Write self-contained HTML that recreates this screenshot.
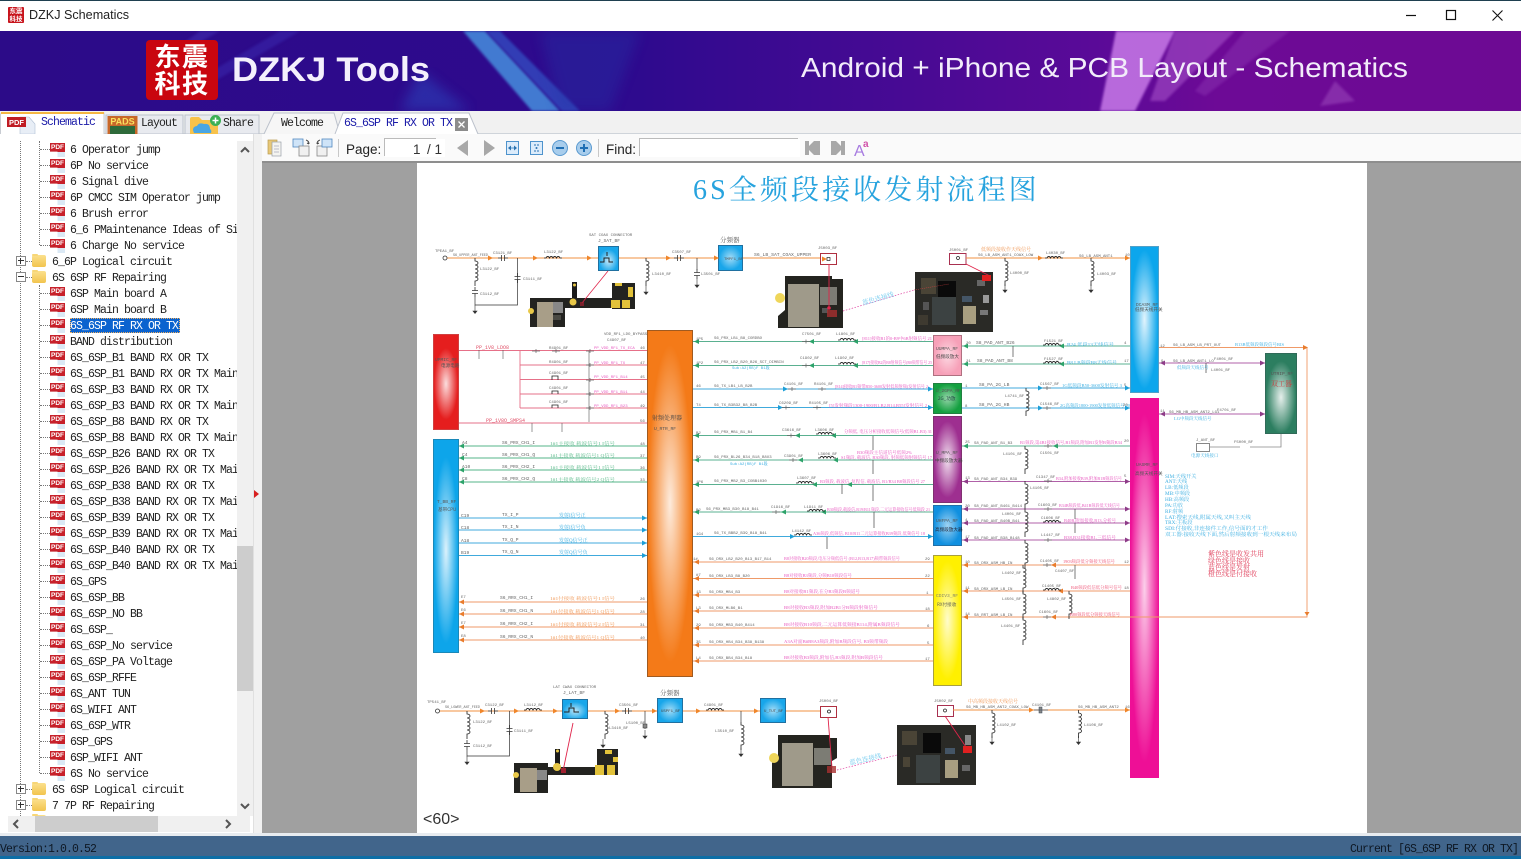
<!DOCTYPE html>
<html><head><meta charset="utf-8"><title>DZKJ Schematics</title>
<style>
html,body{margin:0;padding:0;background:#f0f0f0}
body{position:relative;width:1521px;height:859px;overflow:hidden;font-family:"Liberation Sans","Noto Sans CJK SC",sans-serif}
.abs,.b{position:absolute}
.m{font-family:"Liberation Mono","Noto Sans CJK SC",monospace;font-size:11.5px;letter-spacing:-.9px;color:#222;white-space:pre}
#tree{position:absolute;left:0;top:141px;width:237px;height:675px;overflow:hidden;background:#fff}
.r{position:relative;height:16px;line-height:20px;padding-left:70px;white-space:pre;font-family:"Liberation Mono",monospace;font-size:11.5px;letter-spacing:-.9px;color:#222}
.r:before{content:"";position:absolute;left:40px;top:8px;width:10px;border-top:1px dotted #777}
.r i{position:absolute;left:50px;top:2px;width:15px;height:14px;background:#dbe9f5;clip-path:polygon(0 0,100% 0,100% 100%,50% 100%,50% 62%,0 62%)}
.r i:after{content:"PDF";position:absolute;left:0;top:0;width:15px;height:9px;background:#c7202a;color:#fff;font:bold 6.5px/9px "Liberation Sans",sans-serif;letter-spacing:0;text-align:center}
.f{padding-left:52px}
.f:before{left:26px;width:6px}
.f i{left:32px;top:2px;width:14px;height:12px;clip-path:none;background:linear-gradient(#fbe08d,#f2c44e);border-radius:2px}
.f i:after{content:"";background:#f7d677;width:6px;height:2px;top:-1px;border-radius:1px}
.f b{position:absolute;left:16px;top:3px;width:8px;height:8px;border:1px solid #888;background:#fff;z-index:2}
.f b:before{content:"";position:absolute;left:1px;top:3px;width:6px;height:1px;background:#333}
.f b.p:after{content:"";position:absolute;left:3px;top:1px;width:1px;height:6px;background:#333}
.sel{color:#fff;position:relative}
.sel span{position:absolute;left:70px;top:1px;width:110px;height:15px;background:#0b63cf;outline:1px dotted #f0b060;outline-offset:-1px;line-height:18px}
.b{box-sizing:border-box}
svg text{white-space:pre}
.a{font:4px "Liberation Mono",monospace;fill:#666}
.p{font:4.6px "Liberation Mono",monospace;fill:#666}
.c{font:4.6px "Liberation Serif","Noto Serif CJK SC",serif}
.k{fill:#e85ac0}.g{fill:#5dbb8c}.u{fill:#3fb0e2}.o{fill:#f09a5a}
.w{fill:none;stroke:#333;stroke-width:.7}
.l{fill:none;stroke-width:.9}
</style></head><body>

<!-- title bar -->
<div class="abs" style="left:0;top:0;width:1521px;height:31px;background:#fff;border-top:1px solid #1f4050;box-sizing:border-box"></div>
<div class="abs" style="left:8px;top:7px;width:16px;height:16px;background:#c8141c;border-radius:1px;color:#fff;font:bold 6.5px/7.5px 'Noto Sans CJK SC',sans-serif;text-align:center;letter-spacing:0">东震<br>科技</div>
<div class="abs" style="left:29px;top:8px;font-size:12.6px;line-height:15px;color:#222">DZKJ Schematics</div>
<svg class="abs" style="left:1390px;top:0" width="131" height="31"><path d="M16 15.5h10" stroke="#111" stroke-width="1.2"/><rect x="56.5" y="10.5" width="9" height="9" fill="none" stroke="#111" stroke-width="1.2"/><path d="M102.5 10.5l10 10M112.5 10.5l-10 10" stroke="#111" stroke-width="1.1"/></svg>

<!-- banner -->
<svg class="abs" style="left:0;top:31px" width="1521" height="80" viewBox="0 0 1521 80">
<defs><linearGradient id="bg" x1="0" x2="1" y1="0" y2="0"><stop offset="0" stop-color="#2c0b88"/><stop offset=".42" stop-color="#2e0a8e"/><stop offset=".72" stop-color="#5a0a98"/><stop offset=".8" stop-color="#6d0a96"/><stop offset="1" stop-color="#6d0a93"/></linearGradient>
<filter id="bl"><feGaussianBlur stdDeviation="1.2"/></filter><filter id="bl2"><feGaussianBlur stdDeviation="6"/></filter></defs>
<rect width="1521" height="80" fill="url(#bg)"/>
<polygon points="280,0 300,0 215,50 195,50" fill="#3a2ab0" opacity=".5" filter="url(#bl)"/>
<polygon points="200,0 220,0 180,22 170,22" fill="#4a3ac0" opacity=".4" filter="url(#bl)"/>
<polygon points="463,0 485,0 560,80 532,80" fill="#4aa0e8" opacity=".75" filter="url(#bl)"/>
<polygon points="486,0 500,0 580,80 562,80" fill="#3460d0" opacity=".6" filter="url(#bl)"/>
<polygon points="420,40 470,80 400,80" fill="#2a4ac0" opacity=".5" filter="url(#bl2)"/>
<polygon points="540,0 640,0 610,80 560,80" fill="#2338a8" opacity=".35" filter="url(#bl2)"/>
<polygon points="1116,0 1175,0 1135,80 1100,80" fill="#c87ae8" opacity=".85" filter="url(#bl)"/>
<polygon points="1175,0 1235,0 1165,70 1150,70" fill="#a550c8" opacity=".6" filter="url(#bl)"/>
<polygon points="1245,0 1290,0 1205,65 1195,60" fill="#8a30b0" opacity=".5" filter="url(#bl)"/>
<polygon points="1335,50 1355,70 1320,75" fill="#a050c0" opacity=".5" filter="url(#bl)"/>
<rect x="146" y="9" width="72" height="60" rx="4" fill="#c9060f"/>
<text x="182" y="35" text-anchor="middle" style="font:bold 26px 'Noto Sans CJK SC',sans-serif;fill:#fff;letter-spacing:1.500px">东震</text>
<text x="182" y="62" text-anchor="middle" style="font:bold 26px 'Noto Sans CJK SC',sans-serif;fill:#fff;letter-spacing:1.500px">科技</text>
<text x="232" y="50" textLength="198" lengthAdjust="spacingAndGlyphs" style="font:bold 34px 'Liberation Sans',sans-serif;fill:#f4f0fc">DZKJ Tools</text>
<text x="801" y="46" textLength="607" lengthAdjust="spacingAndGlyphs" style="font:28px 'Liberation Sans',sans-serif;fill:#f2ecfa">Android + iPhone &amp; PCB Layout - Schematics</text>
</svg>

<!-- tab strip -->
<div class="abs" style="left:0;top:111px;width:1521px;height:23px;background:#f1f1f1"></div>
<div class="abs" style="left:0;top:133px;width:262px;height:1px;background:#cfd4da"></div>
<div class="abs" style="left:262px;top:133px;width:1259px;height:1px;background:#cfd4da"></div>
<svg class="abs" style="left:0;top:111px" width="480" height="24" viewBox="0 0 480 24">
<path d="M0.5 23V4q0-2 2-2H104v21" fill="#fff" stroke="#c8ccd2"/><rect x="1" y="1" width="103" height="2" fill="#f5b642"/>
<path d="M20 6h9l6 7v10H20z" fill="#e8eef6" stroke="#b0c0d4" stroke-width=".6"/>
<rect x="7" y="6" width="19" height="10" fill="#c01c24"/><text x="16.5" y="14" text-anchor="middle" style="font:bold 7.5px 'Liberation Sans',sans-serif;fill:#fff">PDF</text>
<rect x="106" y="4" width="77" height="19" fill="#e8eaef" stroke="#bcc2cc"/>
<rect x="107.5" y="5" width="30" height="18" fill="#c8682a"/><text x="122.5" y="13.5" text-anchor="middle" style="font:bold 9px 'Liberation Sans',sans-serif;fill:#f8e060">PADS</text><rect x="110" y="15" width="25" height="8" fill="#2e6a3a"/>
<rect x="185" y="4" width="74" height="19" fill="#e8eaef" stroke="#bcc2cc"/>
<path d="M190 8q0-2 2-2h7l3 3h16v14h-28z" fill="#f8c24a"/><path d="M194 22q-3-6 3-7q2-4 7-2q6-1 6 5q2 1 1 4z" fill="#4aa6e4"/><circle cx="215.500" cy="9.500" r="5.500" fill="#3cb054"/><path d="M212.500 9.500h6M215.500 6.500v6" stroke="#fff" stroke-width="1.500"/>
<path d="M264 23l10-21h60l6 21" fill="#f6f6f6" stroke="#bcc2cc"/>
<path d="M335 23l8-21h126l9 21" fill="#fff" stroke="#bcc2cc"/>
<rect x="455" y="7" width="13" height="13" fill="#8c8c8c"/><path d="M458.500 10.500l6 6M464.500 10.500l-6 6" stroke="#fff" stroke-width="1.300"/>
</svg>
<div class="abs m" style="left:41px;top:116px;color:#1a1aa8;line-height:14px">Schematic</div>
<div class="abs m" style="left:141px;top:117px;line-height:14px">Layout</div>
<div class="abs m" style="left:223px;top:117px;line-height:14px">Share</div>
<div class="abs m" style="left:281px;top:117px;line-height:14px">Welcome</div>
<div class="abs m" style="left:344px;top:117px;color:#1a1aa8;line-height:14px">6S_6SP RF RX OR TX</div>

<!-- left panel -->
<div class="abs" style="left:0;top:134px;width:253px;height:702px;background:#fff"></div>
<div id="tree">
<div class="r"><i></i>6 Operator jump</div>
<div class="r"><i></i>6P No service</div>
<div class="r"><i></i>6 Signal dive</div>
<div class="r"><i></i>6P CMCC SIM Operator jump</div>
<div class="r"><i></i>6 Brush error</div>
<div class="r"><i></i>6_6 PMaintenance Ideas of Si</div>
<div class="r"><i></i>6 Charge No service</div>
<div class="r f"><b class="p"></b><i></i>6_6P Logical circuit</div>
<div class="r f"><b></b><i></i>6S 6SP RF Repairing</div>
<div class="r"><i></i>6SP Main board A</div>
<div class="r"><i></i>6SP Main board B</div>
<div class="r sel"><i></i><span>6S_6SP RF RX OR TX</span></div>
<div class="r"><i></i>BAND distribution</div>
<div class="r"><i></i>6S_6SP_B1 BAND RX OR TX</div>
<div class="r"><i></i>6S_6SP_B1 BAND RX OR TX Main</div>
<div class="r"><i></i>6S_6SP_B3 BAND RX OR TX</div>
<div class="r"><i></i>6S_6SP_B3 BAND RX OR TX Main</div>
<div class="r"><i></i>6S_6SP_B8 BAND RX OR TX</div>
<div class="r"><i></i>6S_6SP_B8 BAND RX OR TX Main</div>
<div class="r"><i></i>6S_6SP_B26 BAND RX OR TX</div>
<div class="r"><i></i>6S_6SP_B26 BAND RX OR TX Mai</div>
<div class="r"><i></i>6S_6SP_B38 BAND RX OR TX</div>
<div class="r"><i></i>6S_6SP_B38 BAND RX OR TX Mai</div>
<div class="r"><i></i>6S_6SP_B39 BAND RX OR TX</div>
<div class="r"><i></i>6S_6SP_B39 BAND RX OR TX Mai</div>
<div class="r"><i></i>6S_6SP_B40 BAND RX OR TX</div>
<div class="r"><i></i>6S_6SP_B40 BAND RX OR TX Mai</div>
<div class="r"><i></i>6S_GPS</div>
<div class="r"><i></i>6S_6SP_BB</div>
<div class="r"><i></i>6S_6SP_NO BB</div>
<div class="r"><i></i>6S_6SP_</div>
<div class="r"><i></i>6S_6SP_No service</div>
<div class="r"><i></i>6S_6SP_PA Voltage</div>
<div class="r"><i></i>6S_6SP_RFFE</div>
<div class="r"><i></i>6S_ANT TUN</div>
<div class="r"><i></i>6S_WIFI ANT</div>
<div class="r"><i></i>6S_6SP_WTR</div>
<div class="r"><i></i>6SP_GPS</div>
<div class="r"><i></i>6SP_WIFI ANT</div>
<div class="r"><i></i>6S No service</div>
<div class="r f"><b class="p"></b><i></i>6S 6SP Logical circuit</div>
<div class="r f"><b class="p"></b><i></i>7 7P RF Repairing</div>
<div class="r f" style="height:3px"><i></i></div>
<div class="abs" style="left:20px;top:0;height:675px;border-left:1px dotted #777"></div>
<div class="abs" style="left:39px;top:0;height:104px;border-left:1px dotted #777"></div>
<div class="abs" style="left:39px;top:144px;height:488px;border-left:1px dotted #777"></div>
</div>
<!-- scrollbars -->
<div class="abs" style="left:237px;top:141px;width:16px;height:675px;background:#f0f0f0"></div>
<div class="abs" style="left:237px;top:546px;width:16px;height:145px;background:#cdcdcd"></div>
<div class="abs" style="left:8px;top:816px;width:242px;height:16px;background:#f0f0f0"></div>
<div class="abs" style="left:35px;top:816px;width:123px;height:16px;background:#cdcdcd"></div>
<svg class="abs" style="left:0;top:140px" width="262" height="696" viewBox="0 0 262 696">
<path d="M241 12l4-4 4 4M241 664l4 4 4-4M18 680l-4 4 4 4M226 680l4 4-4 4" fill="none" stroke="#555" stroke-width="2"/>
</svg>
<div class="abs" style="left:253px;top:134px;width:9px;height:702px;background:#f1f1f1;border-left:1px solid #e0e0e0;box-sizing:border-box"></div>
<svg class="abs" style="left:253px;top:488px" width="9" height="14"><polygon points="1,2 6,6 1,10" fill="#d82020"/></svg>

<!-- toolbar -->
<div class="abs" style="left:262px;top:134px;width:1259px;height:27px;background:#fafafa"></div>
<svg class="abs" style="left:262px;top:134px" width="620" height="27" viewBox="0 0 620 27">
<g>
<rect x="6" y="6" width="9" height="14" fill="#e8c878" stroke="#b89a50" stroke-width=".7"/><rect x="10" y="8" width="9" height="14" fill="#f4f4f0" stroke="#98a0a8" stroke-width=".7"/><path d="M12 12h5M12 15h5M12 18h5" stroke="#aab" stroke-width=".7"/>
<rect x="31" y="5" width="10" height="8" fill="#cfe4f8" stroke="#5088c0" stroke-width=".8"/><rect x="37" y="12" width="10" height="10" fill="#f0f0f0" stroke="#888" stroke-width=".8"/><path d="M44 6q3 1 3 4M47 10l-2-1" fill="none" stroke="#444"/>
<rect x="55" y="12" width="10" height="10" fill="#f0f0f0" stroke="#888" stroke-width=".8"/><rect x="60" y="5" width="10" height="8" fill="#cfe4f8" stroke="#5088c0" stroke-width=".8"/><path d="M58 6q-3 1-3 4M55 10l2-1" fill="none" stroke="#444"/>
<path d="M76.500 5v18" stroke="#c8c8c8"/>
<polygon points="206,6 206,22 195,14" fill="#a8a8a8"/><polygon points="222,6 222,22 233,14" fill="#a8a8a8"/>
<rect x="244.500" y="7.500" width="12" height="13" fill="#dcecfb" stroke="#4e93cc"/><path d="M247 14h7" stroke="#4e93cc"/><polygon points="246,14 249,11.500 249,16.500" fill="#2a72b0"/><polygon points="255,14 252,11.500 252,16.500" fill="#2a72b0"/>
<rect x="268.500" y="7.500" width="12" height="13" fill="#dcecfb" stroke="#4e93cc"/><path d="M272 11h5M272 17h5" stroke="#2a72b0" stroke-dasharray="2 1"/><circle cx="274.500" cy="14" r="1" fill="#2a72b0"/>
<circle cx="298" cy="14" r="7.500" fill="#a8cdec" stroke="#5a9ad0"/><path d="M294 14h8" stroke="#1f6fb4" stroke-width="2"/>
<circle cx="322" cy="14" r="7.500" fill="#a8cdec" stroke="#5a9ad0"/><path d="M318 14h8M322 10v8" stroke="#1f6fb4" stroke-width="2"/>
<path d="M336.500 5v18" stroke="#c8c8c8"/>
<path d="M543 7h4v5l5-5h6v14h-6l-5-5v5h-4z" fill="#a8a8a8"/><path d="M583 7h-4v5l-5-5h-5v14h5l5-5v5h4z" fill="#a8a8a8"/>
<text x="592" y="22" style="font:16px 'Liberation Sans',sans-serif;fill:#a77be0">A</text><text x="601" y="13" style="font:bold 10px 'Liberation Sans',sans-serif;fill:#d050a8">a</text>
</g>
<rect x="123" y="5" width="60" height="18" fill="#fff"/><rect x="378" y="5" width="160" height="18" fill="#fff"/>
<path d="M122.500 22V4.500H174M377.500 22V4.500H536" fill="none" stroke="#bbb"/>
</svg>
<div class="abs" style="left:346px;top:141px;font-size:13.5px;line-height:17px;color:#222">Page:</div>
<div class="abs" style="left:413px;top:141px;font-size:13.5px;line-height:17px;color:#333">1</div>
<div class="abs" style="left:427px;top:141px;font-size:13.5px;line-height:17px;color:#333">/ 1</div>
<div class="abs" style="left:606px;top:141px;font-size:13.5px;line-height:17px;color:#222">Find:</div>

<!-- document -->
<div class="abs" style="left:262px;top:161px;width:1259px;height:2px;background:#8e8e8e"></div>
<div class="abs" style="left:262px;top:163px;width:1105px;height:670px;background:#a0a0a0"></div>
<div class="abs" style="left:1367px;top:163px;width:154px;height:670px;background:#a0a0a0"></div>
<div class="abs" style="left:417px;top:163px;width:950px;height:670px;background:#fff"></div>

<!-- blocks -->
<div class="b" style="left:433px;top:334px;width:26px;height:96px;background:radial-gradient(ellipse 50% 38% at 50% 52%,rgba(255,255,255,.85),rgba(255,255,255,0)),#e51e1e;border:1px solid #d04040"></div>
<div class="b" style="left:433px;top:439px;width:26px;height:214px;background:radial-gradient(ellipse 50% 44% at 50% 52%,rgba(255,255,255,.85),rgba(255,255,255,0)),#0da5ea;border:1px solid #1a88b8"></div>
<div class="b" style="left:647px;top:330px;width:46px;height:347px;background:radial-gradient(ellipse 50% 46% at 50% 50%,rgba(255,255,255,.85),rgba(255,255,255,0)),#f47a18;border:1px solid #a05a20"></div>
<div class="b" style="left:933px;top:335px;width:29px;height:41px;background:radial-gradient(ellipse 50% 50% at 50% 50%,rgba(255,255,255,.6),rgba(255,255,255,0)),#f7a0b8;border:1px solid #b07080"></div>
<div class="b" style="left:933px;top:383px;width:29px;height:31px;background:radial-gradient(ellipse 50% 50% at 50% 50%,rgba(255,255,255,.55),rgba(255,255,255,0)),#14a040;border:1px solid #208040"></div>
<div class="b" style="left:933px;top:416px;width:29px;height:87px;background:radial-gradient(ellipse 50% 45% at 50% 50%,rgba(255,255,255,.85),rgba(255,255,255,0)),#9e2f90;border:1px solid #803070"></div>
<div class="b" style="left:933px;top:505px;width:29px;height:41px;background:radial-gradient(ellipse 50% 50% at 50% 50%,rgba(255,255,255,.6),rgba(255,255,255,0)),#1090e0;border:1px solid #2070a8"></div>
<div class="b" style="left:933px;top:555px;width:29px;height:131px;background:radial-gradient(ellipse 50% 46% at 50% 50%,rgba(255,255,255,.8),rgba(255,255,255,0)),#fff000;border:1px solid #a8a040"></div>
<div class="b" style="left:1130px;top:246px;width:29px;height:147px;background:radial-gradient(ellipse 50% 48% at 50% 50%,rgba(255,255,255,.88),rgba(255,255,255,0)),#0ca6ec;border:1px solid #50a0c8"></div>
<div class="b" style="left:1130px;top:398px;width:29px;height:380px;background:radial-gradient(ellipse 50% 46% at 50% 50%,rgba(255,255,255,.8),rgba(255,255,255,0)),#ee0f96"></div>
<div class="b" style="left:1265px;top:353px;width:32px;height:81px;background:radial-gradient(ellipse 50% 46% at 50% 55%,rgba(255,255,255,.88),rgba(255,255,255,0)),#2c7e60;border:1px solid #306a58"></div>
<div class="b" style="left:598px;top:246px;width:21px;height:25px;background:radial-gradient(ellipse 50% 50% at 50% 60%,rgba(255,255,255,.75),rgba(255,255,255,0)),#18a6ea;border:1px solid #2070a0"></div>
<div class="b" style="left:718px;top:245px;width:25px;height:26px;background:radial-gradient(ellipse 50% 50% at 50% 50%,rgba(255,255,255,.6),rgba(255,255,255,0)),#18a6ea;border:1px solid #2070a0"></div>
<div class="b" style="left:562px;top:699px;width:26px;height:20px;background:radial-gradient(ellipse 50% 50% at 50% 60%,rgba(255,255,255,.7),rgba(255,255,255,0)),#18a6ea;border:1px solid #2070a0"></div>
<div class="b" style="left:657px;top:698px;width:26px;height:25px;background:radial-gradient(ellipse 50% 50% at 50% 50%,rgba(255,255,255,.6),rgba(255,255,255,0)),#18a6ea;border:1px solid #2070a0"></div>
<div class="b" style="left:760px;top:698px;width:26px;height:25px;background:radial-gradient(ellipse 50% 50% at 50% 50%,rgba(255,255,255,.6),rgba(255,255,255,0)),#18a6ea;border:1px solid #2070a0"></div>

<!-- schematic -->
<svg class="abs" style="left:0;top:0;filter:blur(.35px)" width="1521" height="859" viewBox="0 0 1521 859">
<defs>
<path id="ch" d="M0 0h2a2 3 0 0 1 3.500 0a2 3 0 0 1 3.500 0a2 3 0 0 1 3.500 0a2 3 0 0 1 3.500 0h2" fill="none" stroke="#222" stroke-width=".8"/>
<path id="cv" d="M0 0v3a3 2 0 0 1 0 4a3 2 0 0 1 0 4a3 2 0 0 1 0 4a3 2 0 0 1 0 4a3 2 0 0 1 0 4v5" fill="none" stroke="#222" stroke-width=".8"/>
<path id="gn" d="M0 0v6M-2 6h4l-2 2.500z" fill="#333" stroke="#333" stroke-width=".6"/>
<path id="cp" d="M-5 0h3.500M-1.500-3v6M1.500-3v6M1.500 0H5" fill="none" stroke="#333" stroke-width=".8"/>
<path id="cq" d="M0-5v3.500M-3-1.500h6M-3 1.500h6M0 1.500V5" fill="none" stroke="#333" stroke-width=".8"/>
<path id="sm" d="M-4 0h8M0-2v4" stroke="#666" stroke-width=".7"/>
<polygon id="ar" points="0,-2.500 5,0 0,2.500"/>
<polygon id="al" points="5,-2.500 0,0 5,2.500"/>
<polygon id="ad" points="-2.500,0 2.500,0 0,4"/>
</defs>

<text x="693" y="199" style="font:28px 'Liberation Serif','Noto Serif CJK SC',serif;fill:#27a3de;letter-spacing:3.100px">6S全频段接收发射流程图</text>

<!-- top row -->
<g stroke="#f09040" class="l" fill="none"><path d="M447 258H598M619 258H718M743 258H820"/></g>
<circle cx="445" cy="258" r="2" fill="#fff" stroke="#333" stroke-width=".8"/>
<g fill="#f0862a"><use href="#ar" x="488" y="258"/><use href="#ar" x="533" y="258"/><use href="#ar" x="587" y="258"/><use href="#ar" x="666" y="258"/><use href="#ar" x="714" y="258"/></g>
<use href="#cp" x="503" y="258"/><use href="#cp" x="679" y="258"/><use href="#ch" x="544" y="258"/>
<use href="#cv" x="475" y="258"/><use href="#cq" x="475" y="292"/><use href="#gn" x="475" y="305"/>
<path class="w" d="M475 297v8H517.500V268M517.500 258v10"/><use href="#cq" x="517.500" y="278"/>
<use href="#cv" x="646" y="258"/><use href="#gn" x="646" y="286"/>
<use href="#cq" x="697" y="274"/><path class="w" d="M697 258v12"/><use href="#gn" x="697" y="279"/>
<path d="M600 262h4v-4h5v4h4" fill="none" stroke="#222" stroke-width="1"/><path d="M607 252v4" stroke="#222"/>
<rect x="820.500" y="253.500" width="16" height="11" fill="#fff" stroke="#b03040"/><use href="#ar" x="822" y="259" fill="#f0862a"/><rect x="827" y="257.500" width="3" height="3" fill="#fff" stroke="#222" stroke-width=".7"/>
<rect x="949.500" y="253.500" width="16.500" height="11" fill="#fff" stroke="#a83050"/><circle cx="958" cy="258" r="1.500" fill="#fff" stroke="#222" stroke-width=".7"/>
<path d="M966 258H1130" stroke="#f09040" class="l"/>
<g fill="#f0862a"><use href="#ar" x="1038" y="258"/><use href="#ar" x="1125" y="258"/></g>
<use href="#ch" x="1045" y="258"/><use href="#cv" x="1005" y="258"/><use href="#gn" x="1005" y="284"/><use href="#cv" x="1091" y="258"/><use href="#gn" x="1091" y="284"/>
<text class="a" x="435" y="252">TPEA1_BF</text><text class="a" x="453" y="256" textLength="35" lengthAdjust="spacingAndGlyphs">S6_UPPER_ANT_FEED</text><text class="a" x="493" y="254">C3121_BF</text><text class="a" x="544" y="253">L3122_BF</text>
<text class="a" x="589" y="236">SAT COAX CONNECTOR</text><text class="p" x="598" y="242">J_SAT_BF</text><text class="a" x="480" y="270">L3122_BF</text><text class="a" x="480" y="295">C3112_BF</text><text class="a" x="523" y="280">C3111_BF</text><text class="a" x="652" y="275">L3410_BF</text><text class="a" x="672" y="253">C3507_BF</text><text class="a" x="701" y="275">L3501_BF</text>
<text class="c" x="720" y="242" style="font-size:6.500px;fill:#555">分频器</text>
<text class="p" x="754" y="256" textLength="57" lengthAdjust="spacingAndGlyphs">S6_LB_SAT_COAX_UPPER</text><text class="a" x="818" y="249">J5003_BF</text><text class="a" x="949" y="251">J5001_BF</text>
<text class="c o" x="981" y="251" style="font-size:5px">低频段接收作天线信号</text><text class="a" x="978" y="256">S6_LB_ASM_ANT1_COAX_LOW</text><text class="a" x="1046" y="254">L4030_BF</text><text class="a" x="1079" y="257">S6_LB_ASM_ANT1</text><text class="a" x="1010" y="274">L4000_BF</text><text class="a" x="1097" y="275">L4003_BF</text><text class="a" x="1125" y="256">10</text>
<text class="a" x="724" y="260" style="fill:#555">TMPF1_BF</text>

<!-- red block rows -->
<g stroke="#e67088" class="l"><path d="M459 350.500H647M520 350.500V408M520 365H647M520 379.500H647M520 394H647M520 408H647M459 423H647"/></g>
<text class="c" x="476" y="349" style="fill:#e05068;font:5px 'Liberation Mono',monospace">PP_1V8_LDO8</text><text class="c" x="486" y="422" style="fill:#e05068;font:5px 'Liberation Mono',monospace">PP_1V8O_SMPS4</text>
<text class="a k" x="594" y="349">PP_VDD_RF1_TX_ECA</text><text class="a k" x="594" y="364">PP_VDD_RF1_TX</text><text class="a k" x="594" y="378">PP_VDD_RF1_B14</text><text class="a k" x="594" y="393">PP_VDD_RF1_B11</text><text class="a k" x="594" y="407">PP_VDD_RF1_B23</text>
<text class="a" x="604" y="335">VDD_RF1_LDO_BYPASS</text><text class="a" x="607" y="341">C4907_BF</text>
<g><use href="#sm" x="536" y="351"/><use href="#sm" x="556" y="351"/><use href="#sm" x="590" y="351"/><use href="#sm" x="590" y="365"/><use href="#sm" x="590" y="380"/><use href="#sm" x="590" y="394"/><use href="#sm" x="590" y="408"/>
<path d="M589 351v15M589 365v14M589 380v14M589 394v14M589 408v14M479 350v9M503 350v9M532 423v9M562 423v9" stroke="#555" stroke-width=".6"/></g>
<path d="M552 380v-4h6v4M552 394v-3h6v3M552 408v-3h6v3" fill="none" stroke="#222" stroke-width=".8"/>
<text class="a" x="549" y="349">R4901_BF</text><text class="a" x="549" y="363">R4901_BF</text><text class="a" x="549" y="374">C4901_BF</text><text class="a" x="549" y="389">C4901_BF</text><text class="a" x="549" y="403">C4901_BF</text>
<text class="a" x="640" y="349">46</text><text class="a" x="640" y="364">47</text><text class="a" x="640" y="378">45</text><text class="a" x="640" y="393">44</text><text class="a" x="640" y="407">49</text><text class="a" x="640" y="422">56</text>

<!-- left blue rows -->
<g stroke="#55b48a" class="l"><path d="M459 446H647M459 458H647M459 470H647M459 482H647"/></g>
<g fill="#2da36a"><use href="#al" x="459" y="446"/><use href="#al" x="459" y="458"/><use href="#al" x="459" y="470"/><use href="#al" x="459" y="482"/></g>
<text class="p" x="462" y="444">A4</text><text class="p" x="462" y="456">C4</text><text class="p" x="462" y="468">A10</text><text class="p" x="462" y="480">C8</text>
<text class="p" x="502" y="444">S6_PRX_CH1_I</text><text class="p" x="502" y="456">S6_PRX_CH1_Q</text><text class="p" x="502" y="468">S6_PRX_CH2_I</text><text class="p" x="502" y="480">S6_PRX_CH2_Q</text>
<text class="c g" x="550" y="445" textLength="65" lengthAdjust="spacingAndGlyphs">1#1主接收 载波信号1 I信号</text><text class="c g" x="550" y="457" textLength="65" lengthAdjust="spacingAndGlyphs">1#1主接收 载波信号1 Q信号</text><text class="c g" x="550" y="469" textLength="65" lengthAdjust="spacingAndGlyphs">1#1主接收 载波信号1 I信号</text><text class="c g" x="550" y="481" textLength="65" lengthAdjust="spacingAndGlyphs">1#1主接收 载波信号2 Q信号</text>
<text class="a" x="640" y="445">48</text><text class="a" x="640" y="457">37</text><text class="a" x="640" y="469">36</text><text class="a" x="640" y="481">33</text>
<g stroke="#40aadc" class="l"><path d="M459 518H647M459 530H647M459 543H647M459 555.500H647"/></g>
<g fill="#1d9fd8"><use href="#ar" x="642" y="518"/><use href="#ar" x="642" y="530"/><use href="#ar" x="642" y="543"/><use href="#ar" x="642" y="555.500"/></g>
<text class="p" x="461" y="517">C19</text><text class="p" x="461" y="529">C18</text><text class="p" x="461" y="542">A18</text><text class="p" x="461" y="554">B19</text>
<text class="p" x="502" y="516">TX_I_P</text><text class="p" x="502" y="528">TX_I_N</text><text class="p" x="502" y="541">TX_Q_P</text><text class="p" x="502" y="553">TX_Q_N</text>
<text class="c u" x="559" y="517" style="font-size:5px">发射I信号正</text><text class="c u" x="559" y="529" style="font-size:5px">发射I信号负</text><text class="c u" x="559" y="542" style="font-size:5px">发射Q信号正</text><text class="c u" x="559" y="554" style="font-size:5px">发射Q信号负</text>
<g stroke="#ef9a68" class="l"><path d="M459 602H647M459 614H647M459 627H647M459 640H647"/></g>
<g fill="#e97c2c"><use href="#al" x="459" y="602"/><use href="#al" x="459" y="614"/><use href="#al" x="459" y="627"/><use href="#al" x="459" y="640"/></g>
<text class="a" x="461" y="598">E7</text><text class="a" x="461" y="611">E6</text><text class="a" x="461" y="624">E7</text><text class="a" x="461" y="637">E8</text>
<text class="p" x="500" y="599">S6_RRX_CH1_I</text><text class="p" x="500" y="612">S6_RRX_CH1_N</text><text class="p" x="500" y="625">S6_RRX_CH2_I</text><text class="p" x="500" y="638">S6_RRX_CH2_N</text>
<text class="c o" x="550" y="600" textLength="65" lengthAdjust="spacingAndGlyphs">1#1付接收 载波信号1 I信号</text><text class="c o" x="550" y="613" textLength="65" lengthAdjust="spacingAndGlyphs">1#1付接收 载波信号1 Q信号</text><text class="c o" x="550" y="626" textLength="65" lengthAdjust="spacingAndGlyphs">1#1付接收 载波信号2 I信号</text><text class="c o" x="550" y="639" textLength="65" lengthAdjust="spacingAndGlyphs">1#1付接收 载波信号1 Q信号</text>
<text class="a" x="640" y="600">26</text><text class="a" x="640" y="613">28</text><text class="a" x="640" y="626">31</text><text class="a" x="640" y="639">40</text>

<!-- center rows -->
<g stroke="#5ab090" class="l"><path d="M693 341.500H933M693 365.500H933M693 435.500H933M693 460H933M693 484.500H933M693 512H933"/></g>
<g stroke="#40aadc" class="l"><path d="M693 389H933M693 407.500H933M693 536.500H933"/></g>
<g stroke="#ef9a68" class="l"><path d="M693 562H933M693 578.500H933M693 595H933M693 611H933M693 628H933M693 645H933M693 661H933"/></g>
<g fill="#2da36a"><use href="#al" x="694" y="341.500"/><use href="#al" x="809" y="341.500"/><use href="#al" x="853" y="341.500"/><use href="#al" x="694" y="365.500"/><use href="#al" x="809" y="365.500"/><use href="#al" x="853" y="365.500"/><use href="#al" x="694" y="435.500"/><use href="#al" x="795" y="435.500"/><use href="#al" x="831" y="435.500"/><use href="#al" x="694" y="460"/><use href="#al" x="798" y="460"/><use href="#al" x="833" y="460"/><use href="#al" x="694" y="484.500"/><use href="#al" x="812" y="484.500"/><use href="#al" x="847" y="484.500"/><use href="#al" x="694" y="512"/><use href="#al" x="781" y="512"/><use href="#al" x="821" y="512"/></g>
<g fill="#1d9fd8"><use href="#ar" x="783" y="389"/><use href="#ar" x="928" y="389"/><use href="#ar" x="778" y="407.500"/><use href="#ar" x="928" y="407.500"/><use href="#ar" x="790" y="536.500"/><use href="#ar" x="928" y="536.500"/></g>
<g fill="#e97c2c"><use href="#al" x="694" y="562"/><use href="#al" x="694" y="578.500"/><use href="#al" x="694" y="595"/><use href="#al" x="694" y="611"/><use href="#al" x="694" y="628"/><use href="#al" x="694" y="645"/><use href="#al" x="694" y="661"/></g>
<use href="#ch" x="838" y="340"/><use href="#ch" x="838" y="364"/><use href="#ch" x="816" y="434"/><use href="#ch" x="818" y="458"/><use href="#ch" x="796" y="483"/><use href="#ch" x="807" y="511"/><use href="#ch" x="794" y="535"/>
<use href="#sm" x="806" y="341.500"/><use href="#sm" x="806" y="365.500"/><use href="#sm" x="791" y="435.500"/><use href="#sm" x="793" y="460"/><use href="#sm" x="776" y="512"/><use href="#sm" x="792" y="389"/><use href="#sm" x="786" y="407.500"/><use href="#sm" x="822" y="389"/><use href="#sm" x="817" y="407.500"/>
<path d="M873 436v14M873 460v14M873 485v16M874 512v16M827 537v12M842 484v10" stroke="#444" stroke-width=".7"/>
<text class="a" x="696" y="340">1P5</text><text class="a" x="696" y="364">1P2</text><text class="a" x="696" y="387">46</text><text class="a" x="696" y="406">T4</text><text class="a" x="696" y="434">B2</text><text class="a" x="696" y="458">B9</text><text class="a" x="696" y="483">1P6</text><text class="a" x="696" y="511">B2</text><text class="a" x="696" y="535">1G4</text>
<text class="a" x="714" y="339">S6_PRX_LB1_B8_CORDBO</text><text class="a" x="714" y="363">S6_PRX_LB2_B20_B26_SCT_DIMBIN</text><text class="a" x="714" y="387">S6_TX_LB1_LB_B2B</text><text class="a" x="714" y="406">S6_TX_B3B32_B8_B2B</text><text class="a" x="714" y="433">S6_PRX_MB1_B1_B4</text><text class="a" x="714" y="458">S6_PRX_BL26_B34_B18_B8U3</text><text class="a" x="714" y="482">S6_PRX_MB2_B3_COBB1030</text><text class="a" x="706" y="510">S6_PRX_MB3_B30_B18_B41</text><text class="a" x="714" y="534">S6_TX_BBB2_B39_B18_B41</text>
<text class="a" x="802" y="335">C7501_BF</text><text class="a" x="836" y="335">L1801_BF</text><text class="a" x="800" y="359">C1902_BF</text><text class="a" x="835" y="359">L1902_BF</text><text class="a" x="784" y="385">C4101_BF</text><text class="a" x="814" y="385">R4101_BF</text><text class="a" x="779" y="404">C6209_BF</text><text class="a" x="809" y="404">R4105_BF</text><text class="a" x="782" y="431">C3616_BF</text><text class="a" x="815" y="431">L3606_BF</text><text class="a" x="784" y="457">C3901_BF</text><text class="a" x="818" y="455">L3606_BF</text><text class="a" x="797" y="479">L3607_BF</text><text class="a" x="771" y="508">C1916_BF</text><text class="a" x="804" y="508">L1911_BF</text><text class="a" x="792" y="532">L4142_BF</text>
<g class="c k">
<text x="862" y="340" textLength="70" lengthAdjust="spacingAndGlyphs">[811]接收B1的0-B9中6B射频信号 21</text><text x="862" y="364" textLength="70" lengthAdjust="spacingAndGlyphs">[817]接收B2的B8射频信号(B0频带信号 25</text>
<text x="835" y="388" textLength="93" lengthAdjust="spacingAndGlyphs">[814]接收B1频带B50-3600发射低频射频(发射信号 2</text><text x="829" y="407" textLength="98" lengthAdjust="spacingAndGlyphs">[5]发射频段1300-1900/B1,B2,B14,B55]发射信号 2</text>
<text x="844" y="433" textLength="88" lengthAdjust="spacingAndGlyphs">分频低, 电压分析接收低频信号(低频B1.B3) 31</text><text x="857" y="454" textLength="55" lengthAdjust="spacingAndGlyphs">B30频段主信道信号低频2%</text><text x="841" y="459" textLength="91" lengthAdjust="spacingAndGlyphs">S1频段, 载波信, B30频段, 射频低频射频信号 17</text><text x="820" y="483" textLength="105" lengthAdjust="spacingAndGlyphs">B3频段, 载波信, 复程信, 载波信, B1/B34 B8频段信号 27</text><text x="827" y="511" textLength="103" lengthAdjust="spacingAndGlyphs">B30频段,载波信,B19/B11频段,二元运算接收信号低频段 21</text><text x="813" y="535" textLength="112" lengthAdjust="spacingAndGlyphs">A36频段,低频信, B10/B11二元运算接收B39频段,低频信号 18</text>
</g>
<text class="a u" x="732" y="369">Sub:A2(RB)F B1段</text><text class="a u" x="730" y="465">Sub:A2(RB)F B1段</text>
<text class="a" x="693" y="560">1#</text><text class="a" x="696" y="576">#7</text><text class="a" x="696" y="593">13</text><text class="a" x="696" y="609">L3</text><text class="a" x="696" y="626">29</text><text class="a" x="696" y="643">35</text><text class="a" x="696" y="659">L4</text>
<text class="a" x="709" y="560">S6_DRX_LB2_B20_B13_B17_B14</text><text class="a" x="709" y="577">S6_DRX_LB3_B8_B20</text><text class="a" x="709" y="593">S6_DRX_MB4_B3</text><text class="a" x="709" y="609">S6_DRX_MLB6_B1</text><text class="a" x="709" y="626">S6_DRX_MB3_B40_B414</text><text class="a" x="709" y="643">S6_DRX_HB4_B34_B38_B138</text><text class="a" x="709" y="659">S6_DRX_BB4_B34_B18</text>
<g class="c k"><text x="784" y="560" textLength="116" lengthAdjust="spacingAndGlyphs">B8对接收B20频段,电压分频低信号 (B12,B13,B17)频带频段信号</text><text x="784" y="577" textLength="68" lengthAdjust="spacingAndGlyphs">B8对接收B3频段,分频B10频段信号</text><text x="784" y="593" textLength="76" lengthAdjust="spacingAndGlyphs">B8对接收B1频段,在分B3频段B频道号</text><text x="784" y="609" textLength="94" lengthAdjust="spacingAndGlyphs">B8对接收B3频段,附加B2B1分B频段射频信号</text><text x="784" y="626" textLength="116" lengthAdjust="spacingAndGlyphs">B8对接收B10频段,二元运算低频接B114,附属B频段信号</text><text x="784" y="643" textLength="104" lengthAdjust="spacingAndGlyphs">A3A对面B#B8A3频段,附加B频段信号, B3频带频段</text><text x="784" y="659" textLength="99" lengthAdjust="spacingAndGlyphs">B8对接收B3频段,附加信,B3频段,附加B频段信号</text></g>
<text class="a" x="925" y="560">29</text><text class="a" x="925" y="577">22</text><text class="a" x="926" y="594">1</text><text class="a" x="925" y="610">18</text><text class="a" x="927" y="627">6</text><text class="a" x="927" y="644">5</text><text class="a" x="925" y="660">17</text>

<!-- between blocks -->
<g stroke="#5ab090" class="l"><path d="M962 346H1130M962 364H1130M962 446H1130"/></g>
<g stroke="#40aadc" class="l"><path d="M962 388H1130M962 408H1130"/></g>
<g stroke="#b060a8" class="l"><path d="M962 481.500H1130M962 509H1130M962 523H1130M962 540H1130M1159 363H1265M1159 414H1265"/></g>
<g stroke="#ef9a68" class="l"><path d="M962 565H1130M962 591H1130M962 617H1307V347.500H1159"/></g>
<g fill="#2da36a"><use href="#al" x="963" y="346"/><use href="#al" x="1059" y="346"/><use href="#al" x="963" y="364"/><use href="#al" x="1059" y="364"/><use href="#al" x="963" y="446"/><use href="#al" x="1053" y="446"/></g>
<g fill="#1d9fd8"><use href="#ar" x="1038" y="388"/><use href="#ar" x="1125" y="388"/><use href="#ar" x="1038" y="408"/><use href="#ar" x="1125" y="408"/></g>
<g fill="#8e3c88"><use href="#al" x="963" y="481.500"/><use href="#ar" x="1125" y="481.500"/><use href="#al" x="963" y="509"/><use href="#ar" x="1125" y="509"/><use href="#al" x="963" y="523"/><use href="#ar" x="1125" y="523"/><use href="#al" x="963" y="540"/><use href="#ar" x="1125" y="540"/><use href="#al" x="1160" y="363"/><use href="#ar" x="1260" y="363"/><use href="#al" x="1160" y="414"/><use href="#ar" x="1260" y="414"/></g>
<g fill="#e97c2c"><use href="#al" x="963" y="565"/><use href="#al" x="1051" y="565"/><use href="#al" x="963" y="591"/><use href="#al" x="1058" y="591"/><use href="#al" x="963" y="617"/><use href="#al" x="1051" y="617"/><use href="#ar" x="1303" y="347.500"/><use href="#ad" x="1307" y="612"/></g>
<use href="#ch" x="1043" y="345"/><use href="#ch" x="1043" y="363"/><use href="#ch" x="1043" y="522"/><use href="#ch" x="1043" y="590"/>
<use href="#sm" x="1047" y="388"/><use href="#sm" x="1047" y="408"/><use href="#sm" x="1048" y="446"/><use href="#sm" x="1048" y="481"/><use href="#sm" x="1048" y="509"/><use href="#sm" x="1048" y="540"/><use href="#sm" x="1047" y="565"/><use href="#sm" x="1047" y="617"/>
<path d="M1013 346v11" stroke="#444" stroke-width=".7"/><use href="#cv" x="1026" y="388"/><use href="#cv" x="1025" y="446"/><use href="#cv" x="1025" y="481"/><use href="#cv" x="1025" y="509"/><use href="#cv" x="1025" y="540"/><use href="#cv" x="1023" y="565"/><use href="#cv" x="1023" y="591"/><use href="#cv" x="1023" y="617"/><use href="#cv" x="1069" y="591"/>
<path d="M1075 565v14M1075 509v10M1075 523v10M1206 363v10" stroke="#444" stroke-width=".7"/>
<text class="p" x="976" y="344">S8_PAD_ANT_B26</text><text class="p" x="977" y="362">S8_PAD_ANT_B8</text><text class="p" x="979" y="386">S8_PA_2G_LB</text><text class="p" x="979" y="406">S8_PA_2G_HB</text><text class="a" x="974" y="444">S8_PAD_ANT_B1_B3</text><text class="a" x="974" y="480">S8_PAD_ANT_B34_B39</text><text class="a" x="974" y="507">S8_PAD_ANT_B461_B414</text><text class="a" x="974" y="522">S8_PAD_ANT_B40B_B41</text><text class="a" x="974" y="539">S8_PAD_ANT_B38_B148</text><text class="a" x="974" y="564">S8_DRX_ASM_HB_IN</text><text class="a" x="974" y="590">S8_DRX_ASM_LB_IN</text><text class="a" x="974" y="616">S8_RRT_ASM_LB_IN</text>
<text class="a" x="1044" y="342">F1521_BF</text><text class="a" x="1044" y="360">F1527_BF</text><text class="a" x="1040" y="385">C1567_BF</text><text class="a" x="1040" y="405">C1546_BF</text><text class="a" x="1040" y="454">C1501_BF</text><text class="a" x="1036" y="478">C1347_BF</text><text class="a" x="1038" y="506">C1603_BF</text><text class="a" x="1041" y="519">C1606_BF</text><text class="a" x="1041" y="536">L1447_BF</text><text class="a" x="1040" y="562">C1405_BF</text><text class="a" x="1042" y="587">C1405_BF</text><text class="a" x="1039" y="613">C1601_BF</text>
<text class="a" x="1005" y="397">L4741_BF</text><text class="a" x="1003" y="455">L4101_BF</text><text class="a" x="1030" y="489">L4105_BF</text><text class="a" x="1002" y="515">L4001_BF</text><text class="a" x="1002" y="574">L4402_BF</text><text class="a" x="1002" y="600">L4501_BF</text><text class="a" x="1001" y="627">L4401_BF</text><text class="a" x="1047" y="600">L4802_BF</text><text class="a" x="1055" y="572">C4407_BF</text>
<g class="c"><text class="u" x="1067" y="346" textLength="47" lengthAdjust="spacingAndGlyphs">B24 低段13天线信号</text><text class="u" x="1067" y="364" textLength="50" lengthAdjust="spacingAndGlyphs">B8 LB频段B8天线信号</text><text class="u" x="1062" y="387" textLength="60" lengthAdjust="spacingAndGlyphs">1G低频段B50-3600发射信号 3</text><text class="u" x="1060" y="407" textLength="70" lengthAdjust="spacingAndGlyphs">2G高频段1800-1900发射低频信号 20</text><text class="k" x="1020" y="444" textLength="102" lengthAdjust="spacingAndGlyphs">B1频段,第4B1接收信号,B1频段,附加B1发射B频段B34</text><text class="k" x="1056" y="480" textLength="66" lengthAdjust="spacingAndGlyphs">B34,附加接收B39,附加B1B频段信号</text><text class="k" x="1059" y="507" textLength="61" lengthAdjust="spacingAndGlyphs">B34B频段低,B41B频段低天线信号</text><text class="k" x="1064" y="522" textLength="52" lengthAdjust="spacingAndGlyphs">B40B,附加接收,B13,分析号</text><text class="k" x="1064" y="539" textLength="52" lengthAdjust="spacingAndGlyphs">B38,B31接收B1,三低信号</text><text class="k" x="1063" y="563" textLength="52" lengthAdjust="spacingAndGlyphs" style="fill:#e57">1903频段低分频接天线信号</text><text class="k" x="1071" y="589" textLength="51" lengthAdjust="spacingAndGlyphs" style="fill:#e57">B40频段低信低分频号信号</text><text class="k" x="1070" y="616" textLength="50" lengthAdjust="spacingAndGlyphs" style="fill:#e57">B80频段低分频接天线信号</text></g>
<text class="a" x="1124" y="344">4</text><text class="a" x="1124" y="362">17</text><text class="a" x="1124" y="386">5</text><text class="a" x="1123" y="406">20</text><text class="a" x="1124" y="442">20</text><text class="a" x="1124" y="477">5</text><text class="a" x="1124" y="563">12</text><text class="a" x="1124" y="589">18</text><text class="a" x="966" y="344">20</text><text class="a" x="966" y="362">21</text><text class="a" x="965" y="387">1</text><text class="a" x="965" y="407">8</text><text class="a" x="965" y="443">25</text><text class="a" x="965" y="479">13</text><text class="a" x="965" y="507">20</text><text class="a" x="965" y="521">4</text><text class="a" x="965" y="538">17</text><text class="a" x="965" y="563">10</text><text class="a" x="965" y="589">11</text><text class="a" x="965" y="615">14</text>
<text class="a" x="1160" y="347">12</text><text class="a" x="1173" y="346">S6_LB_ASM_LB_PRT_OUT</text><text class="c u" x="1235" y="346" style="font-size:4.500px">B13B低频段频段信号RIS</text>
<text class="a" x="1161" y="362">9</text><text class="a" x="1173" y="362">S6_LB_ASM_ANT1_LO</text><text class="a" x="1214" y="360">F4001_BF</text><text class="c u" x="1177" y="369" style="font-size:4.500px">低频段天线信号</text><text class="a" x="1211" y="371">L4001_BF</text><text class="a" x="1160" y="412">11</text><text class="a" x="1169" y="413">S6_MB_HB_ASM_ANT2_LG1</text><text class="a" x="1217" y="411">F4701_BF</text><text class="c u" x="1174" y="420" style="font-size:4.500px">LG中频段天线信号</text>
<rect x="1196.500" y="443.500" width="13" height="8" fill="#fff" stroke="#555" stroke-width=".7"/><path d="M1209 447H1240M1250 447H1281V434" fill="none" stroke="#888" stroke-width=".8"/><text class="a" x="1196" y="441">J_ANT_BF</text><text class="a" x="1234" y="443">F5000_BF</text><text class="c u" x="1191" y="457">电源天线接口</text>

<!-- legend -->
<g class="c u" style="font-size:5.200px"><text x="1165" y="478">SIM:天线开关</text><text x="1165" y="483">ANT:天线</text><text x="1165" y="489">LB:低频段</text><text x="1165" y="495">MB:中频段</text><text x="1165" y="501">HB:高频段</text><text x="1165" y="507">PA:功放</text><text x="1165" y="513">RF:射频</text><text x="1165" y="519" textLength="86" lengthAdjust="spacingAndGlyphs">LAT:搜索天线,附属天线,又叫主天线</text><text x="1165" y="524">TRX:主板段</text><text x="1165" y="530" textLength="103" lengthAdjust="spacingAndGlyphs">SDI:付接收,非连接件工作,信号面的才工作</text><text x="1165" y="536" textLength="132" lengthAdjust="spacingAndGlyphs">双工器:接收天线下面,然后射频接收到一根天线来布局</text></g>
<g class="c" style="font-size:7px;fill:#e0405c"><text x="1208" y="556">紫色线是收发共用</text><text x="1208" y="563">绿色线是接收</text><text x="1208" y="569.500">蓝色线是发射</text><text x="1208" y="576">橙色线是付接收</text></g>

<!-- block labels -->
<g class="p" style="fill:#555"><text x="435" y="361">UPMIC_RF</text><text x="441" y="367" style="font-family:'Noto Sans CJK SC',sans-serif">电源电路</text><text x="437" y="503">T_BB_RF</text><text x="438" y="511" style="font-family:'Noto Sans CJK SC',sans-serif">基带CPU</text><text class="c" x="652" y="420" style="font-size:6px;fill:#444">射频处理器</text><text x="654" y="430">U_RTR_RF</text><text x="936" y="350">UUMPA_RF</text><text x="936" y="358" style="font-family:'Noto Sans CJK SC',sans-serif;fill:#444">低频段放大</text><text x="936" y="392">U_2GPA_RF</text><text x="938" y="400" style="font-family:'Noto Sans CJK SC',sans-serif;fill:#244">2G_功放</text><text x="936" y="454">U_MPA_RF</text><text x="935" y="462" style="font-family:'Noto Sans CJK SC',sans-serif;fill:#444">中频段放大器</text><text x="936" y="522">UHFPA_RF</text><text x="935" y="531" style="font-family:'Noto Sans CJK SC',sans-serif;fill:#223">高频段放大器</text><text x="936" y="597" style="fill:#886">CDIV3_RF</text><text x="937" y="606" style="font-family:'Noto Sans CJK SC',sans-serif;fill:#665">RX付接收</text><text x="1136" y="306">DCASM_RF</text><text x="1135" y="311" style="font-family:'Noto Sans CJK SC',sans-serif">低频天线开关</text><text x="1136" y="466">UASMR_RF</text><text x="1135" y="475" style="font-family:'Noto Sans CJK SC',sans-serif">高频天线开关</text><text x="1271" y="375">UTRIP_RF</text></g>
<text class="c" x="1271" y="386" style="font-size:7px;fill:#c84040">双工器</text>
<text class="a" x="661" y="712" style="fill:#444">USPF1_BF</text><text class="a" x="764" y="712" style="fill:#444">U_TUT_BF</text>

<!-- pcb top flex -->
<g>
<rect x="572" y="282" width="5" height="17" fill="#1a1a1a"/><circle cx="574.500" cy="285" r="1.500" fill="#e8c848"/>
<rect x="530" y="298" width="35" height="29" fill="#232320"/><rect x="563" y="298" width="50" height="10" fill="#232320"/><rect x="612" y="283" width="23" height="26" fill="#232320"/>
<rect x="537" y="302" width="16" height="25" fill="#a89e88"/><rect x="553" y="302" width="10" height="11" fill="#888"/><rect x="553" y="315" width="8" height="5" fill="#4a4a44"/>
<circle cx="573" cy="302" r="3.500" fill="#e8c848"/><circle cx="531" cy="311" r="3" fill="#e8c848"/>
<rect x="611" y="300" width="9" height="8" fill="#e2c23a"/><rect x="622" y="300" width="8" height="8" fill="#e2c23a"/><rect x="628" y="287" width="5" height="10" fill="#e2c23a"/><rect x="615" y="283" width="7" height="3" fill="#e2c23a"/>
<path d="M608 271L582 303" stroke="#e0244a" stroke-width=".8"/><rect x="580" y="302" width="4" height="4" fill="#a02030" opacity=".7"/>
</g>
<!-- pcb top 2 -->
<path d="M785 276h47v3h11v49h-65v-12l7-6z" fill="#24241f"/><circle cx="780" cy="298" r="5" fill="#efd65a"/>
<rect x="788" y="284" width="31" height="43" fill="#9f9a8a"/><rect x="820" y="287" width="17" height="18" fill="#7c7c74"/><rect x="822" y="308" width="6" height="5" fill="#555"/>
<path d="M829 264V308" stroke="#e0244a" stroke-width=".9"/><circle cx="829" cy="308" r="1.800" fill="#e0244a"/><rect x="827" y="310" width="10" height="7" fill="#a83030" opacity=".8"/>
<path d="M843 311L914 290" stroke="#e040a0" stroke-width=".7" stroke-dasharray="1.500 1.500"/>
<text class="c u" x="863" y="305" transform="rotate(-16 863 305)" style="font-size:6.500px;fill:#6cc8ee">蓝色连接线</text>
<!-- pcb top 3 -->
<rect x="915" y="272" width="78" height="60" fill="#2a2a26"/><rect x="938" y="281" width="18" height="22" fill="#0a0a0a"/><rect x="932" y="297" width="24" height="28" fill="#3c4242"/><rect x="963" y="306" width="13" height="18" fill="#a89e80"/><rect x="921" y="278" width="15" height="16" fill="#4a4436"/><rect x="983" y="295" width="6" height="8" fill="#999"/><rect x="977" y="280" width="8" height="6" fill="#666"/><rect x="923" y="302" width="6" height="8" fill="#555"/><rect x="918" y="315" width="10" height="10" fill="#3e3a30"/><rect x="962" y="296" width="10" height="6" fill="#456"/><rect x="980" y="310" width="8" height="5" fill="#777"/>
<path d="M966 264L990 276" stroke="#e0244a" stroke-width=".9"/><rect x="982" y="275" width="9" height="6" fill="#e02020"/>
<path d="M914 290l35-6" stroke="#e04040" stroke-width=".5" stroke-dasharray="1 1"/>

<!-- bottom row -->
<g stroke="#f09040" class="l"><path d="M439 711H562M588 711H657M683 711H760M786 711H820"/></g>
<circle cx="437.500" cy="711" r="2" fill="#fff" stroke="#333" stroke-width=".8"/>
<g fill="#f0862a"><use href="#ar" x="480" y="711"/><use href="#ar" x="514" y="711"/><use href="#ar" x="553" y="711"/><use href="#ar" x="615" y="711"/><use href="#ar" x="652" y="711"/><use href="#ar" x="696" y="711"/><use href="#ar" x="754" y="711"/><use href="#ar" x="822" y="711"/></g>
<use href="#cp" x="493" y="711"/><use href="#ch" x="524" y="710"/><use href="#cp" x="627" y="711"/><use href="#ch" x="706" y="710"/>
<use href="#cv" x="467" y="711"/><use href="#cq" x="467" y="745"/><path class="w" d="M467 750v6H509.500V711"/><use href="#cq" x="509.500" y="730"/><use href="#gn" x="467" y="756"/>
<use href="#cv" x="605" y="711"/><use href="#gn" x="603" y="739"/>
<path class="w" d="M645 711v18"/><rect x="643" y="724" width="4" height="4" fill="#888" stroke="#333" stroke-width=".5"/><use href="#gn" x="645" y="730"/>
<use href="#cv" x="741" y="722"/><path class="w" d="M741 711v11"/><use href="#gn" x="741" y="748"/>
<path d="M564 712h5v-4h5v4h5" fill="none" stroke="#222" stroke-width="1"/><path d="M571 703v4" stroke="#222"/>
<rect x="820.500" y="706.500" width="16" height="11" fill="#fff" stroke="#b03040"/><circle cx="829" cy="711.500" r="1.500" fill="#fff" stroke="#222" stroke-width=".8"/>
<rect x="937.500" y="705.500" width="16" height="11" fill="#fff" stroke="#a83050"/><circle cx="945" cy="710.500" r="1.500" fill="#fff" stroke="#222" stroke-width=".7"/>
<path d="M953 710H1130" stroke="#f09040" class="l"/>
<g fill="#f0862a"><use href="#ar" x="1029" y="710"/><use href="#ar" x="1125" y="710"/></g>
<rect x="1039" y="707" width="3" height="6" fill="#888" stroke="#345" stroke-width=".5"/><path d="M1034 710h14" stroke="#456" stroke-width=".7"/>
<use href="#cv" x="992" y="710"/><use href="#gn" x="992" y="736"/><use href="#cv" x="1078.500" y="710"/><use href="#gn" x="1078.500" y="736"/>
<text class="a" x="427" y="703">TP541_BF</text><text class="a" x="445" y="708" textLength="35" lengthAdjust="spacingAndGlyphs">S6_LOWER_ANT_FEED</text><text class="a" x="485" y="706">C3122_BF</text><text class="a" x="524" y="706">L3112_BF</text><text class="a" x="553" y="688">LAT CWAX CONNECTOR</text><text class="p" x="563" y="694">J_LAT_BF</text><text class="c" x="660" y="695" style="font-size:6.500px;fill:#555">分频器</text><text class="a" x="619" y="706">C3501_BF</text><text class="a" x="704" y="706">C4901_BF</text><text class="a" x="819" y="702">J5004_BF</text><text class="a" x="934" y="702">J5002_BF</text>
<text class="a" x="473" y="723">L3122_BF</text><text class="a" x="473" y="747">C3112_BF</text><text class="a" x="514" y="732">C3111_BF</text><text class="a" x="609" y="729">L3410_BF</text><text class="a" x="626" y="724">L5100_BF</text><text class="a" x="715" y="732">L3510_BF</text>
<text class="c o" x="968" y="703" style="font-size:5px">中高频段接收天线信号</text><text class="a" x="966" y="708">S6_MB_HB_ASM_ANT2_COAX_LOW</text><text class="a" x="1032" y="706">C4101_BF</text><text class="a" x="1078" y="708">S6_MB_HB_ASM_ANT2</text><text class="a" x="997" y="726">L4102_BF</text><text class="a" x="1084" y="726">L4106_BF</text><text class="a" x="1125" y="708">16</text>

<!-- pcb bottom flex -->
<rect x="555" y="749" width="5" height="15" fill="#1a1a1a"/><circle cx="557.500" cy="751" r="1.500" fill="#e8c848"/>
<rect x="514" y="763" width="34" height="30" fill="#232320"/><rect x="547" y="767" width="51" height="8" fill="#232320"/><rect x="597" y="749" width="21" height="26" fill="#232320"/>
<rect x="520" y="768" width="17" height="24" fill="#a89e88"/><rect x="537" y="770" width="10" height="10" fill="#888"/>
<circle cx="557" cy="767" r="4" fill="#e8c848"/><circle cx="516" cy="775" r="3" fill="#e8c848"/>
<rect x="595" y="765" width="9" height="10" fill="#e2c23a"/><rect x="607" y="765" width="8" height="10" fill="#e2c23a"/><rect x="605" y="750" width="7" height="4" fill="#e2c23a"/><rect x="613" y="757" width="5" height="5" fill="#e2c23a"/>
<path d="M573 723L563 771" stroke="#e0244a" stroke-width=".9"/><rect x="561" y="768" width="5" height="5" fill="#a02030"/>
<!-- pcb bottom 2 -->
<path d="M778 735h52v3h7v20l-5 3v27h-60v-25l6-5z" fill="#24241f"/><circle cx="774" cy="758" r="5" fill="#efd65a"/>
<rect x="782" y="743" width="31" height="43" fill="#9f9a8a"/><rect x="814" y="748" width="17" height="17" fill="#7c7c74"/>
<path d="M828 717L832 768" stroke="#e0244a" stroke-width=".9"/><rect x="827" y="766" width="9" height="7" fill="#a83030" opacity=".8"/>
<path d="M837 770L897 755" stroke="#e040a0" stroke-width=".7" stroke-dasharray="1.500 1.500"/>
<text x="850" y="765" transform="rotate(-13 850 765)" style="font:6.500px 'Liberation Serif','Noto Serif CJK SC',serif;fill:#6cc8ee">蓝色连接线</text>
<!-- pcb bottom 3 -->
<rect x="897" y="725" width="79" height="60" fill="#2a2a26"/><rect x="923" y="733" width="18" height="20" fill="#0a0a0a"/><rect x="916" y="755" width="24" height="28" fill="#3c4242"/><rect x="945" y="760" width="13" height="18" fill="#a89e80"/><rect x="902" y="731" width="15" height="14" fill="#4a4436"/><rect x="965" y="735" width="6" height="10" fill="#888"/><rect x="903" y="757" width="7" height="10" fill="#4a4436"/><rect x="945" y="748" width="10" height="6" fill="#456"/><rect x="962" y="765" width="8" height="6" fill="#666"/>
<path d="M945 716L966 747" stroke="#e0244a" stroke-width=".9"/><rect x="963" y="746" width="9" height="7" fill="#e02020"/>

<text x="423" y="824" style="font:16px 'Liberation Sans',sans-serif;fill:#333">&lt;60&gt;</text>
</svg>

<!-- bottom -->
<div class="abs" style="left:0;top:833px;width:1521px;height:3px;background:#e8ecf0"></div>
<div class="abs" style="left:0;top:836px;width:1521px;height:20px;background:#41658b"></div>
<div class="abs" style="left:0;top:856px;width:1521px;height:3px;background:#0c6ea6"></div>
<div class="abs m" style="left:0;top:843px;color:#0e1824;line-height:14px">Version:1.0.0.52</div>
<div class="abs m" style="right:3px;top:843px;color:#0e1824;line-height:14px">Current [6S_6SP RF RX OR TX]</div>
</body></html>
